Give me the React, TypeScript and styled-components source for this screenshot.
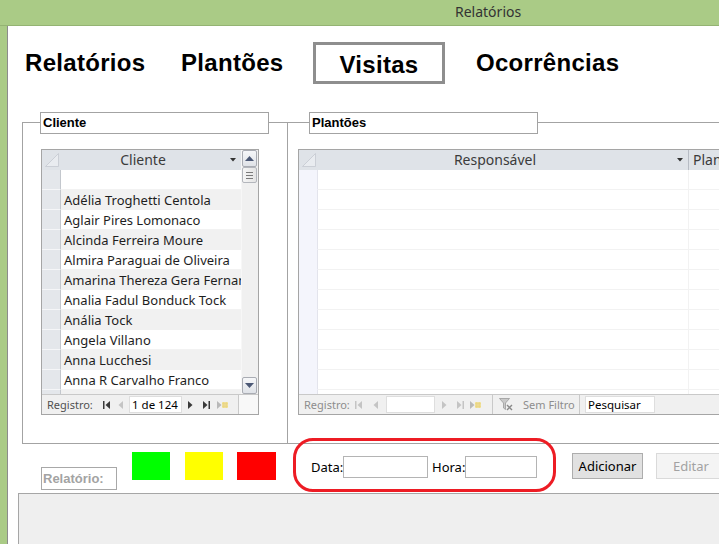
import React from "react";
import styled, { createGlobalStyle, css } from "styled-components";

const GlobalStyle = createGlobalStyle`
  html, body {
    margin: 0;
    padding: 0;
    overflow: hidden;
    background: #ffffff;
  }
  body {
    font-family: "Noto Sans", "Liberation Sans", sans-serif;
  }
`;

const Window = styled.div({
    width: "719px",
    height: "544px",
    display: "flex",
    flexDirection: "column",
    backgroundColor: "#aacb86",
    overflow: "hidden",
});

const TitleBar = styled.div({
    height: "25px",
    flexShrink: 0,
    borderBottom: "1px solid #94b373",
    paddingLeft: "455px",
    fontSize: "14px",
    lineHeight: "24px",
    color: "#333",
});

const Frame = styled.div({
    flex: 1,
    display: "flex",
    minHeight: 0,
});

const FrameEdge = styled.div({
    width: "7px",
    flexShrink: 0,
    backgroundColor: "#aacb86",
    borderRight: "1px solid #8c8c8c",
});

const Content = styled.div({
    flex: 1,
    display: "flex",
    flexDirection: "column",
    backgroundColor: "#ffffff",
    overflow: "hidden",
});

const Tabs = styled.div({
    display: "grid",
    gridTemplateColumns: "156px 132px 163px auto",
    paddingLeft: "17px",
    marginTop: "16px",
    height: "42px",
    flexShrink: 0,
});

const Tab = styled.div<{ $active?: boolean }>`
    font-family: "Liberation Sans", Arial, sans-serif;
    font-weight: 700;
    font-size: 24px;
    letter-spacing: 0.3px;
    color: #000;
    height: 42px;
    line-height: 42px;
    box-sizing: border-box;
    white-space: nowrap;
    ${(p) => p.$active && css`
        width: 132px;
        border: 3px solid #8e8e8e;
        text-align: center;
        padding-top: 4px;
        line-height: 32px;
    `}
`;

const Panels = styled.div({
    display: "flex",
    marginTop: "38px",
    height: "322px",
    flexShrink: 0,
});

const GroupFrame = styled.div<{ $first?: boolean }>`
    position: relative;
    box-sizing: border-box;
    height: 322px;
    border: 1px solid #a3a3a3;
    ${(p) => p.$first
        ? css`
            margin-left: 14px;
            width: 266px;
            flex-shrink: 0;
        `
        : css`
            flex: 1;
            border-left: none;
            border-right: none;
        `}
`;

const Legend = styled.div<{ $left: number }>`
    position: absolute;
    top: -11px;
    left: ${(p) => p.$left}px;
    width: 229px;
    height: 22px;
    box-sizing: border-box;
    border: 1px solid #a3a3a3;
    background: #ffffff;
    padding-left: 2px;
    font-family: "Liberation Sans", Arial, sans-serif;
    font-weight: 700;
    font-size: 13px;
    line-height: 20px;
    color: #000;
`;

const Grid = styled.div<{ $left: number; $width: number }>`
    margin-top: 26px;
    margin-left: ${(p) => p.$left}px;
    width: ${(p) => p.$width}px;
    height: 266px;
    box-sizing: border-box;
    border: 1px solid #a5a5a5;
    display: flex;
    flex-direction: column;
    background: #ffffff;
`;

const GridBody = styled.div({
    height: "244px",
    display: "flex",
    overflow: "hidden",
});

const Sheet = styled.div({
    flex: 1,
    display: "flex",
    flexDirection: "column",
    overflow: "hidden",
});

const HeaderRow = styled.div({
    height: "20px",
    flexShrink: 0,
    display: "flex",
    backgroundColor: "#dfe3e8",
});

const CornerCell = styled.div({
    width: "19px",
    flexShrink: 0,
    display: "flex",
    alignItems: "flex-start",
    justifyContent: "center",
    paddingTop: "3px",
    boxSizing: "border-box",
});

const HeadCell = styled.div<{ $width: number; $line?: boolean }>`
    width: ${(p) => p.$width}px;
    flex-shrink: 0;
    display: flex;
    align-items: center;
    box-sizing: border-box;
    font-size: 14px;
    color: #3b3b3b;
    ${(p) => p.$line && css`border-right: 1px solid #b7bcc4;`}
`;

const HeadLabel = styled.span<{ $center?: boolean }>`
    flex: 1;
    white-space: nowrap;
    line-height: 20px;
    text-align: ${(p) => (p.$center ? "center" : "left")};
    padding-left: ${(p) => (p.$center ? "0" : "4px")};
`;

const HeadArrow = styled.span({
    width: "16px",
    display: "flex",
    justifyContent: "center",
});

const Row = styled.div({
    height: "20px",
    flexShrink: 0,
    display: "flex",
});

const Selector = styled.div<{ $soft?: boolean }>`
    width: 19px;
    flex-shrink: 0;
    box-sizing: border-box;
    background: ${(p) => (p.$soft ? "#f4f5fc" : "#e4e7eb")};
    border-right: 1px solid ${(p) => (p.$soft ? "#e3e4ec" : "#c3c7cd")};
    border-bottom: 1px solid ${(p) => (p.$soft ? "#f4f5fc" : "#f5f6f8")};
`;

const Cell = styled.div<{ $width: number; $alt?: boolean; $line?: boolean }>`
    width: ${(p) => p.$width}px;
    flex-shrink: 0;
    box-sizing: border-box;
    background: ${(p) => (p.$alt ? "#f1f1f1" : "#ffffff")};
    border-bottom: 1px solid ${(p) => (p.$alt ? "#f1f1f1" : "#f2f2f2")};
    ${(p) => p.$line && css`border-right: 1px solid #f2f2f2;`}
    padding: 1px 0 0 3px;
    font-size: 13px;
    line-height: 18px;
    color: #1e1e1e;
    white-space: nowrap;
    overflow: hidden;
`;

const ScrollBar = styled.div({
    width: "17px",
    flexShrink: 0,
    display: "flex",
    flexDirection: "column",
    backgroundColor: "#f0f0f0",
    borderLeft: "1px solid #f7f7f7",
    boxSizing: "border-box",
});

const ScrollButton = styled.div({
    height: "17px",
    margin: "0 1px 0 0",
    boxSizing: "border-box",
    border: "1px solid #a9acb3",
    borderRadius: "2px",
    background: "linear-gradient(#f6f7f9, #dfe2e7)",
    display: "flex",
    alignItems: "center",
    justifyContent: "center",
});

const Thumb = styled.div({
    height: "16px",
    margin: "0 1px 0 0",
    boxSizing: "border-box",
    border: "1px solid #b3b6bc",
    borderRadius: "2px",
    background: "linear-gradient(90deg, #f5f5f5, #e4e4e4)",
    display: "flex",
    flexDirection: "column",
    alignItems: "center",
    justifyContent: "center",
    gap: "2px",
});

const Grip = styled.div({
    width: "7px",
    height: "1px",
    backgroundColor: "#7a7a7a",
});

const Spacer = styled.div({
    flex: 1,
});

const NavBar = styled.div({
    height: "20px",
    flexShrink: 0,
    display: "flex",
    alignItems: "stretch",
    backgroundColor: "#f8f8f8",
    borderTop: "1px solid #c9c9c9",
    boxSizing: "border-box",
});

const NavSection = styled.div<{ $width?: number }>`
    display: flex;
    align-items: center;
    background: #f0f0f0;
    border-right: 1px solid #c9c9c9;
    flex-shrink: 0;
    ${(p) => (p.$width ? css`width: ${p.$width}px;` : css`flex: 1; border-right: none;`)}
    box-sizing: border-box;
`;

const NavLabel = styled.span<{ $width: number; $dim?: boolean }>`
    width: ${(p) => p.$width}px;
    flex-shrink: 0;
    padding-left: 5px;
    box-sizing: border-box;
    font-size: 11px;
    color: ${(p) => (p.$dim ? "#8d8d8d" : "#505050")};
    white-space: nowrap;
`;

const NavSlot = styled.span<{ $width: number }>`
    width: ${(p) => p.$width}px;
    flex-shrink: 0;
    display: flex;
    align-items: center;
    justify-content: center;
`;

const NavBox = styled.div<{ $width: number; $left: number }>`
    width: ${(p) => p.$width}px;
    margin-left: ${(p) => p.$left}px;
    height: 17px;
    flex-shrink: 0;
    box-sizing: border-box;
    background: #ffffff;
    border: 1px solid #dedede;
    padding-left: 2px;
    font-size: 11.5px;
    line-height: 15px;
    color: #000;
    white-space: nowrap;
`;

const BottomRow = styled.div({
    height: "49px",
    flexShrink: 0,
    display: "flex",
    alignItems: "flex-start",
    paddingLeft: "33px",
});

const ReportBox = styled.div({
    width: "76px",
    height: "23px",
    marginTop: "23px",
    flexShrink: 0,
    boxSizing: "border-box",
    border: "1px solid #a8a8a8",
    paddingLeft: "1px",
    fontFamily: '"Liberation Sans", Arial, sans-serif',
    fontWeight: 700,
    fontSize: "13px",
    lineHeight: "21px",
    color: "#a3a3a3",
});

const Swatch = styled.div<{ $color: string; $left: number; $width: number }>`
    width: ${(p) => p.$width}px;
    height: 28px;
    margin-top: 8px;
    margin-left: ${(p) => p.$left}px;
    flex-shrink: 0;
    background: ${(p) => p.$color};
`;

const Highlight = styled.div({
    width: "263px",
    height: "54px",
    marginTop: "-6px",
    marginLeft: "17px",
    flexShrink: 0,
    boxSizing: "border-box",
    border: "3px solid #ed1c24",
    borderRadius: "20px",
    display: "flex",
    alignItems: "center",
    paddingLeft: "15px",
    paddingTop: "4px",
    position: "relative",
    zIndex: 1,
});

const FieldLabel = styled.span<{ $width: number; $left?: number }>`
    width: ${(p) => p.$width}px;
    margin-left: ${(p) => p.$left || 0}px;
    flex-shrink: 0;
    font-size: 13px;
    color: #000;
    white-space: nowrap;
`;

const FieldInput = styled.div<{ $width: number }>`
    width: ${(p) => p.$width}px;
    height: 22px;
    flex-shrink: 0;
    box-sizing: border-box;
    border: 1px solid #b4b4b4;
    background: #ffffff;
`;

const Button = styled.div<{ $left: number; $disabled?: boolean }>`
    width: ${(p) => (p.$disabled ? 70 : 71)}px;
    height: 26px;
    margin-top: 9px;
    margin-left: ${(p) => p.$left}px;
    flex-shrink: 0;
    box-sizing: border-box;
    border: 1px solid ${(p) => (p.$disabled ? "#dadada" : "#adadad")};
    background: ${(p) => (p.$disabled ? "#f4f4f4" : "#e1e1e1")};
    color: ${(p) => (p.$disabled ? "#a2a2a2" : "#000")};
    font-size: 13px;
    line-height: 24px;
    text-align: center;
`;

const Panel = styled.div({
    flex: 1,
    marginLeft: "10px",
    backgroundColor: "#efefef",
    borderTop: "1px solid #a6a6a6",
    borderLeft: "1px solid #a6a6a6",
});

type Glyph = "first" | "prev" | "next" | "last" | "new";

const NavIcon = ({ kind, color }: { kind: Glyph; color: string }) => {
    if (kind === "first") {
        return (
            <svg width="7" height="8" viewBox="0 0 7 8">
                <rect x="0" y="0" width="1.5" height="8" fill={color} />
                <path d="M7 0 L2.5 4 L7 8 Z" fill={color} />
            </svg>
        );
    }
    if (kind === "prev") {
        return (
            <svg width="5" height="8" viewBox="0 0 5 8">
                <path d="M5 0 L0.5 4 L5 8 Z" fill={color} />
            </svg>
        );
    }
    if (kind === "next") {
        return (
            <svg width="5" height="8" viewBox="0 0 5 8">
                <path d="M0 0 L4.5 4 L0 8 Z" fill={color} />
            </svg>
        );
    }
    if (kind === "last") {
        return (
            <svg width="7" height="8" viewBox="0 0 7 8">
                <path d="M0 0 L4.5 4 L0 8 Z" fill={color} />
                <rect x="5.5" y="0" width="1.5" height="8" fill={color} />
            </svg>
        );
    }
    return (
        <svg width="11" height="8" viewBox="0 0 11 8">
            <path d="M0 0 L4.5 4 L0 8 Z" fill="#b9b9b9" />
            <rect x="5" y="1" width="6" height="6" fill="#f3e6a6" />
            <path d="M5 2.5 H11 M5 4 H11 M5 5.5 H11 M6.5 1 V7 M8 1 V7 M9.5 1 V7" stroke="#e8d27c" strokeWidth="0.6" />
        </svg>
    );
};

const Corner = () => (
    <svg width="14" height="14" viewBox="0 0 14 14">
        <path d="M0.5 13.5 L13.5 0.5 L13.5 13.5 Z" fill="#e9ecf0" stroke="#c4c9d0" strokeWidth="0.8" />
    </svg>
);

const DropArrow = () => (
    <svg width="6" height="4" viewBox="0 0 6 4">
        <path d="M0 0 H6 L3 3.5 Z" fill="#333" />
    </svg>
);

const ScrollArrow = ({ up }: { up?: boolean }) => (
    <svg width="9" height="5" viewBox="0 0 9 5">
        <path d={up ? "M0 5 L4.5 0 L9 5 Z" : "M0 0 L4.5 5 L9 0 Z"} fill="#4b5875" />
    </svg>
);

const FilterIcon = () => (
    <svg width="14" height="13" viewBox="0 0 14 13">
        <path d="M0.5 0.5 H10.5 L6.5 5 V11.5 L4.5 10 V5 Z" fill="#c9c9c9" stroke="#9a9a9a" strokeWidth="0.8" />
        <path d="M8 7 L13 12 M13 7 L8 12" stroke="#8a8a8a" strokeWidth="1.4" />
    </svg>
);

const clientes = [
    "",
    "Adélia Troghetti Centola",
    "Aglair Pires Lomonaco",
    "Alcinda Ferreira Moure",
    "Almira Paraguai de Oliveira",
    "Amarina Thereza Gera Fernandes",
    "Analia Fadul Bonduck Tock",
    "Anália Tock",
    "Angela Villano",
    "Anna Lucchesi",
    "Anna R Carvalho Franco",
    "",
];

const ClienteGrid = () => (
    <Grid $left={18} $width={218}>
        <GridBody>
            <Sheet>
                <HeaderRow>
                    <CornerCell><Corner /></CornerCell>
                    <HeadCell $width={180}>
                        <HeadLabel $center>Cliente</HeadLabel>
                        <HeadArrow><DropArrow /></HeadArrow>
                    </HeadCell>
                </HeaderRow>
                {clientes.map((nome, i) => (
                    <Row key={i}>
                        <Selector />
                        <Cell $width={180} $alt={i % 2 === 1}>{nome}</Cell>
                    </Row>
                ))}
            </Sheet>
            <ScrollBar>
                <ScrollButton><ScrollArrow up /></ScrollButton>
                <Thumb><Grip /><Grip /><Grip /></Thumb>
                <Spacer />
                <ScrollButton><ScrollArrow /></ScrollButton>
            </ScrollBar>
        </GridBody>
        <NavBar>
            <NavSection $width={197}>
                <NavLabel $width={58}>Registro:</NavLabel>
                <NavSlot $width={13}><NavIcon kind="first" color="#3a3a3a" /></NavSlot>
                <NavSlot $width={14}><NavIcon kind="prev" color="#c4c4c4" /></NavSlot>
                <NavBox $width={53} $left={2}>1 de 124</NavBox>
                <NavSlot $width={17}><NavIcon kind="next" color="#3a3a3a" /></NavSlot>
                <NavSlot $width={15}><NavIcon kind="last" color="#3a3a3a" /></NavSlot>
                <NavSlot $width={17}><NavIcon kind="new" color="#c4c4c4" /></NavSlot>
            </NavSection>
        </NavBar>
    </Grid>
);

const PlantoesGrid = () => (
    <Grid $left={10} $width={470}>
        <GridBody>
            <Sheet>
                <HeaderRow>
                    <CornerCell><Corner /></CornerCell>
                    <HeadCell $width={371} $line>
                        <HeadLabel $center>Responsável</HeadLabel>
                        <HeadArrow><DropArrow /></HeadArrow>
                    </HeadCell>
                    <HeadCell $width={80}>
                        <HeadLabel>Plantão</HeadLabel>
                    </HeadCell>
                </HeaderRow>
                {Array.from({ length: 12 }).map((_, i) => (
                    <Row key={i}>
                        <Selector $soft />
                        <Cell $width={371} $line />
                        <Cell $width={80} />
                    </Row>
                ))}
            </Sheet>
        </GridBody>
        <NavBar>
            <NavSection $width={194}>
                <NavLabel $width={53} $dim>Registro:</NavLabel>
                <NavSlot $width={13}><NavIcon kind="first" color="#c4c4c4" /></NavSlot>
                <NavSlot $width={20}><NavIcon kind="prev" color="#c4c4c4" /></NavSlot>
                <NavBox $width={49} $left={1}>{""}</NavBox>
                <NavSlot $width={18}><NavIcon kind="next" color="#c4c4c4" /></NavSlot>
                <NavSlot $width={14}><NavIcon kind="last" color="#c4c4c4" /></NavSlot>
                <NavSlot $width={17}><NavIcon kind="new" color="#c4c4c4" /></NavSlot>
            </NavSection>
            <NavSection $width={87}>
                <NavSlot $width={25}><FilterIcon /></NavSlot>
                <NavLabel $width={60} $dim>Sem Filtro</NavLabel>
            </NavSection>
            <NavSection>
                <NavBox $width={70} $left={5}>Pesquisar</NavBox>
            </NavSection>
        </NavBar>
    </Grid>
);

export default function App() {
    return (
        <Window>
            <GlobalStyle />
            <TitleBar>Relatórios</TitleBar>
            <Frame>
                <FrameEdge />
                <Content>
                    <Tabs>
                        <Tab>Relatórios</Tab>
                        <Tab>Plantões</Tab>
                        <Tab $active>Visitas</Tab>
                        <Tab>Ocorrências</Tab>
                    </Tabs>
                    <Panels>
                        <GroupFrame $first>
                            <Legend $left={17}>Cliente</Legend>
                            <ClienteGrid />
                        </GroupFrame>
                        <GroupFrame>
                            <Legend $left={21}>Plantões</Legend>
                            <PlantoesGrid />
                        </GroupFrame>
                    </Panels>
                    <BottomRow>
                        <ReportBox>Relatório:</ReportBox>
                        <Swatch $color="#00ff00" $left={15} $width={38} />
                        <Swatch $color="#ffff00" $left={15} $width={38} />
                        <Swatch $color="#ff0000" $left={14} $width={39} />
                        <Highlight>
                            <FieldLabel $width={32}>Data:</FieldLabel>
                            <FieldInput $width={85} />
                            <FieldLabel $width={33} $left={4}>Hora:</FieldLabel>
                            <FieldInput $width={72} />
                        </Highlight>
                        <Button $left={16}>Adicionar</Button>
                        <Button $left={13} $disabled>Editar</Button>
                    </BottomRow>
                    <Panel />
                </Content>
            </Frame>
        </Window>
    );
}
